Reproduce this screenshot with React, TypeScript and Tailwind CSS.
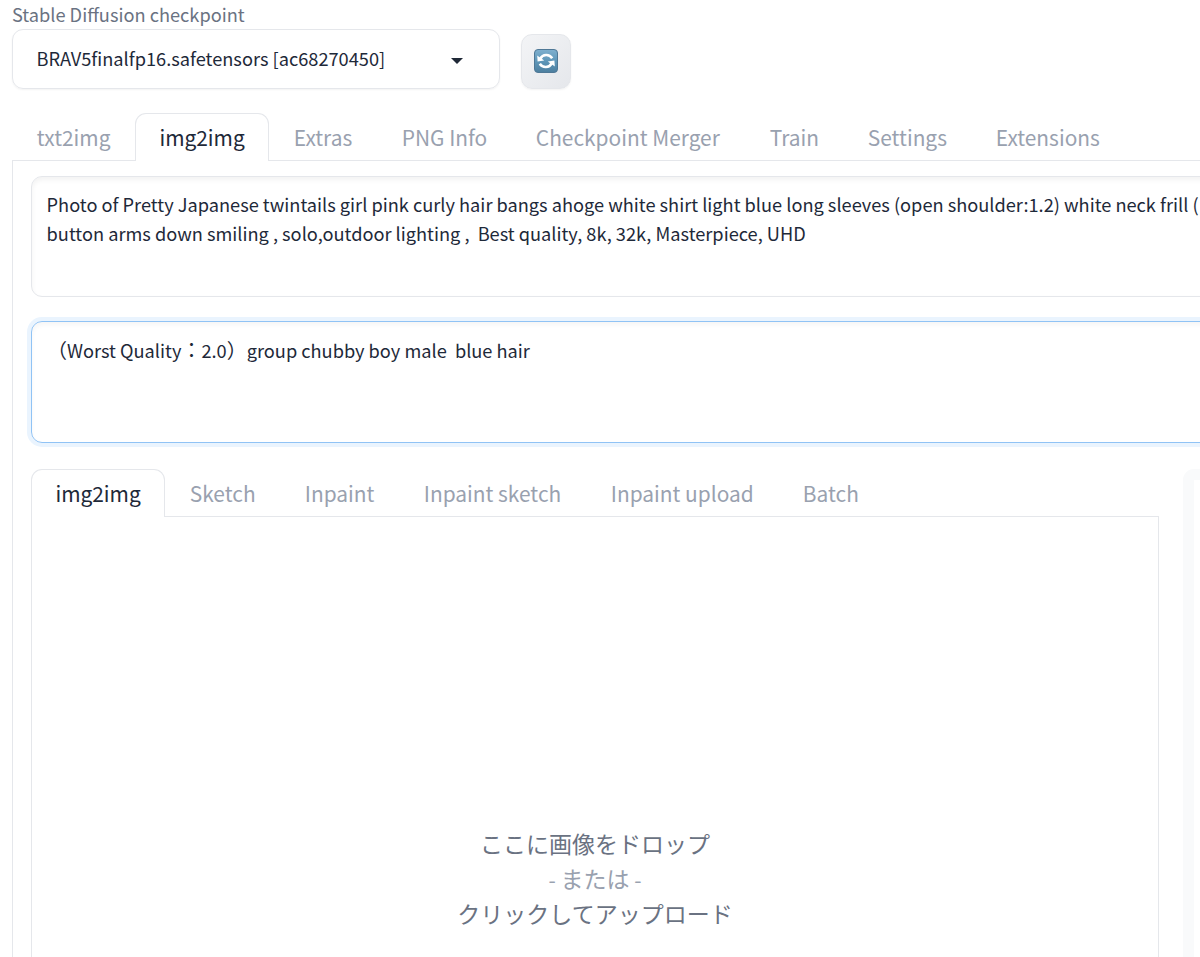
import clsx from "clsx";

type Tab = { label: string; width: string };

const mainTabs: Tab[] = [
  { label: "txt2img", width: "w-[123px]" },
  { label: "img2img", width: "w-[134px]" },
  { label: "Extras", width: "w-[108px]" },
  { label: "PNG Info", width: "w-[134px]" },
  { label: "Checkpoint Merger", width: "w-[234px]" },
  { label: "Train", width: "w-[98px]" },
  { label: "Settings", width: "w-[128px]" },
  { label: "Extensions", width: "w-[154px]" },
];

const modeTabs: Tab[] = [
  { label: "img2img", width: "w-[134px]" },
  { label: "Sketch", width: "w-[115px]" },
  { label: "Inpaint", width: "w-[119px]" },
  { label: "Inpaint sketch", width: "w-[187px]" },
  { label: "Inpaint upload", width: "w-[192px]" },
  { label: "Batch", width: "w-[106px]" },
];

function TabBar({ tabs, active }: { tabs: Tab[]; active: string }) {
  return (
    <div className="flex h-12">
      {tabs.map((tab) => (
        <button
          key={tab.label}
          className={clsx(
            "shrink-0 whitespace-nowrap text-left text-[20.9px]",
            tab.width,
            tab.label === active
              ? "rounded-t-[11px] border border-b-0 border-gray-200 bg-white pb-px pl-[23.4px] leading-[45px] text-gray-800"
              : "border-b border-gray-200 pl-[24.8px] leading-[46px] text-gray-400"
          )}
        >
          {tab.label}
        </button>
      ))}
      <div className="grow border-b border-gray-200" />
    </div>
  );
}

function RefreshIcon() {
  return (
    <svg width="24" height="24" viewBox="0 0 24 24" className="mb-0.5">
      <defs>
        <linearGradient id="tile" x1="0" y1="0" x2="0" y2="1">
          <stop offset="0" stopColor="#7fb0cf" />
          <stop offset="0.5" stopColor="#5f97b9" />
          <stop offset="1" stopColor="#4d7f9f" />
        </linearGradient>
      </defs>
      <rect x="0.5" y="0.5" width="23" height="23" rx="3.5" fill="url(#tile)" stroke="#4f7896" />
      <g fill="none" stroke="#fff" strokeWidth="2.6">
        <path d="M6.4 9.6C8.6 5 15.4 4.8 18.2 9.2" />
        <path d="M17.6 14.4C15.4 19 8.6 19.2 5.8 14.8" />
      </g>
      <path d="M3.2 6.4 3.6 12.4 10.2 11.6Z" fill="#fff" />
      <path d="M20.8 17.6 20.4 11.6 13.8 12.4Z" fill="#fff" />
    </svg>
  );
}

export default function App() {
  return (
    <div className="h-[957px] w-full overflow-hidden bg-white pl-3 font-['Noto_Sans_CJK_JP',sans-serif] text-gray-800">
      <div className="h-[29px] text-[18.22px] leading-[29px] text-gray-500">
        Stable Diffusion checkpoint
      </div>

      <div className="flex h-[84px] items-start">
        <div className="flex h-[60px] w-[488px] items-center justify-between rounded-[11px] border border-gray-200 pl-[23.5px] pr-9 shadow-xs">
          <span className="text-[18.22px]">BRAV5finalfp16.safetensors [ac68270450]</span>
          <svg width="12" height="6" viewBox="0 0 12 6" className="mt-[3px]">
            <path d="M0 0h12L6 6Z" fill="#1f2937" />
          </svg>
        </div>
        <button className="ml-[21px] mt-[5px] flex h-[55px] w-[50px] items-center justify-center rounded-[11px] border border-gray-200 bg-linear-to-br from-gray-100 to-gray-200 shadow-xs">
          <RefreshIcon />
        </button>
      </div>

      <TabBar tabs={mainTabs} active="img2img" />

      <div className="h-[797px] border-l border-gray-200 pl-[18px] pt-[15px]">
        <div className="h-[121px] w-[1300px] whitespace-pre rounded-[11px] border border-gray-200 px-[14.6px] pt-[13px] text-[18.22px] leading-[29px] shadow-[inset_0_3px_5px_rgba(0,0,0,0.05)]">
          <p>Photo of Pretty Japanese twintails girl pink curly hair bangs ahoge white shirt light blue long sleeves (open shoulder:1.2) white neck frill (</p>
          <p>button arms down smiling , solo,outdoor lighting ,&nbsp; Best quality, 8k, 32k, Masterpiece, UHD</p>
        </div>

        <div className="mt-6 h-[122px] w-[1300px] whitespace-pre rounded-[11px] border border-[#90c3f5] px-[15px] pt-[13px] text-[18.22px] leading-[29px] shadow-[0_0_0_4px_#eaf4fe,inset_0_3px_5px_rgba(0,0,0,0.04)]">
          <span className="text-[20px]">（</span>Worst Quality<span className="text-[20px]">：</span>2.0<span className="text-[20px]">）</span>group chubby boy male&nbsp; blue hair
        </div>

        <div className="mt-[26px] flex">
          <div className="w-[1128px] shrink-0">
            <TabBar tabs={modeTabs} active="img2img" />
            <div className="flex h-[480px] flex-col items-center border-x border-gray-200 pt-[309px] text-[23px] leading-[35px] text-gray-500">
              <p>ここに画像をドロップ</p>
              <p className="text-gray-400">
                <span className="text-[21px]">- </span>または<span className="text-[21px]"> -</span>
              </p>
              <p className="-mt-px">クリックしてアップロード</p>
            </div>
          </div>
          <div className="ml-6 h-[540px] w-[200px] shrink-0 rounded-[11px] border-[11px] border-gray-50" />
        </div>
      </div>
    </div>
  );
}
